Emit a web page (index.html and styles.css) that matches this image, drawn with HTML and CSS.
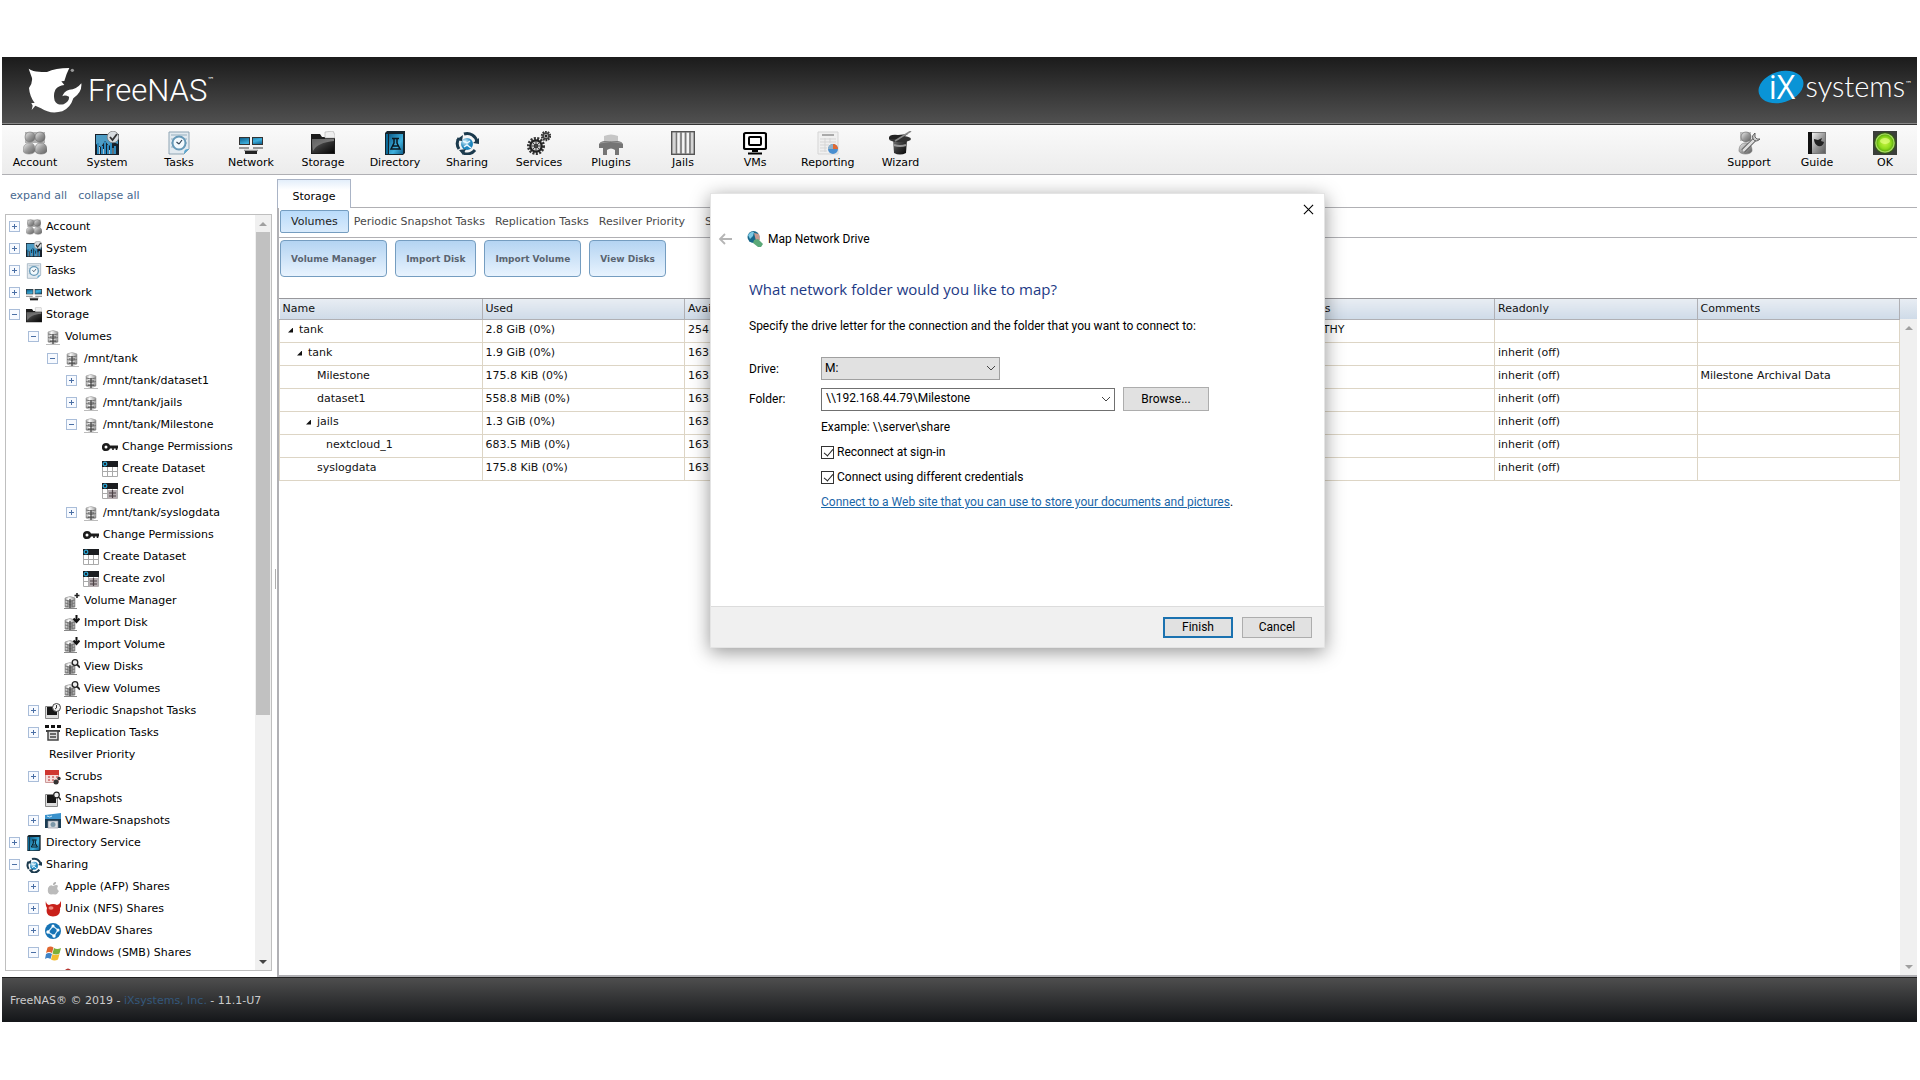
FILE: index.html
```html
<!DOCTYPE html>
<html lang="en">
<head>
<meta charset="utf-8">
<title>FreeNAS - Storage</title>
<link rel="stylesheet" href="styles.css">
</head>
<body>
<svg class="defs" aria-hidden="true">
  <defs>
    <linearGradient id="silver" x1="0" y1="0" x2="1" y2="1"><stop offset="0" stop-color="#f2f2f2"/><stop offset=".5" stop-color="#9a9a9a"/><stop offset="1" stop-color="#5e5e5e"/></linearGradient>
    <linearGradient id="disk" x1="0" x2="1"><stop offset="0" stop-color="#aaa"/><stop offset=".35" stop-color="#fafafa"/><stop offset="1" stop-color="#999"/></linearGradient>
    <linearGradient id="blue" x1="0" y1="0" x2="1" y2="1"><stop offset="0" stop-color="#0d5f8c"/><stop offset=".6" stop-color="#3fb0dd"/><stop offset="1" stop-color="#0d5f8c"/></linearGradient>
    <linearGradient id="dark" x1="0" y1="0" x2="1" y2="1"><stop offset="0" stop-color="#777"/><stop offset=".5" stop-color="#333"/><stop offset="1" stop-color="#050505"/></linearGradient>
    <linearGradient id="sheen" x1="0" y1="0" x2="1" y2="1"><stop offset="0" stop-color="#555"/><stop offset="1" stop-color="#ddd"/></linearGradient>
    <radialGradient id="green"><stop offset="0" stop-color="#c8f542"/><stop offset=".7" stop-color="#8edb1c"/><stop offset="1" stop-color="#5fae10"/></radialGradient>
    <radialGradient id="globe" cx=".35" cy=".3"><stop offset="0" stop-color="#d5f2fd"/><stop offset="1" stop-color="#1c85bd"/></radialGradient>
  </defs>
  <symbol id="i-account" viewBox="0 0 24 24"><rect x="2" y="1" width="20" height="11" fill="#b0b0b0"/><circle cx="7" cy="6" r="5" fill="url(#silver)" stroke="#777" stroke-width=".6"/><circle cx="17" cy="6" r="5" fill="url(#silver)" stroke="#666" stroke-width=".6"/><path d="M0 20c0-6 3-8 7-8s5 3 5 8c-1 4-11 4-12 0z" fill="url(#silver)" stroke="#888" stroke-width=".6"/><path d="M12 20c0-6 2-8 6-8s6 3 6 8c-1 4-11 4-12 0z" fill="url(#silver)" stroke="#666" stroke-width=".6"/></symbol>
  <symbol id="i-system" viewBox="0 0 24 24"><rect y="3" width="24" height="21" fill="#17202a"/><path d="M1 4h22v9l-5-2-4 4-4-5-4 6-5-3z" fill="#4d9cc4"/><path d="M2 23V12h2v11zM6 23V15h2v8zM9 23V11h2v12zM12 23v-9h2v9zM15 23V12h2v11zM19 23v-8h2v8z" fill="#2c8abf"/><path d="M4.500 23v-7M8.500 23v-5M14.500 23v-4M18 23v-6" stroke="#d8e8f0" stroke-width=".8"/><circle cx="18" cy="6" r="5.800" fill="#d9dde0" stroke="#777" stroke-width=".7"/><path d="M15 6l2.500 3L22 3" fill="none" stroke="#333" stroke-width="1.800"/></symbol>
  <symbol id="i-tasks" viewBox="0 0 24 24"><path d="M2 1h20v17l-5 5H2z" fill="#e2eaf0" stroke="#8fa5b4"/><path d="M4 4h16M4 8h16M4 12h16M4 16h14" stroke="#b0c3d0" stroke-width="1.400"/><circle cx="12" cy="12" r="6.500" fill="#f2f9fd" stroke="#6699b8" stroke-width="2"/><path d="M12 13l3-4M9.500 11l2.500 2" fill="none" stroke="#345" stroke-width="1.200"/><path d="M17 23c0-4 1-5 5-5z" fill="#5aa6cf"/></symbol>
  <symbol id="i-network" viewBox="0 0 24 24"><rect y="6" width="11" height="8" fill="#333"/><rect x="13" y="6" width="11" height="8" fill="#333"/><path d="M1 7h9v6H1zM14 7h9v6h-9z" fill="url(#blue)"/><path d="M0 17h10M14 17h10" stroke="#999" stroke-width="2"/><path d="M5 19.500h14" stroke="#999" stroke-width="1.500"/><rect x="6" y="20" width="12" height="3" fill="#222"/></symbol>
  <symbol id="i-storage" viewBox="0 0 24 24"><path d="M0 3h9l2 3h13v17H0z" fill="#1c1c1c"/><path d="M14 1l8-1 2 4v3H14z" fill="#eee" stroke="#aaa" stroke-width=".6"/><path d="M1 8h22v14H1z" fill="url(#dark)"/><path d="M2 20C5 14 12 11 23 10V8H1z" fill="url(#sheen)" opacity=".65"/></symbol>
  <symbol id="i-directory" viewBox="0 0 24 24"><path d="M2 2l2-2h18v22l-2 2H2z" fill="#14232c"/><path d="M6 3h14v20H6z" fill="url(#blue)"/><path d="M3 3h2v20H3z" fill="#0b6a98"/><path d="M9 7.500h7M11 8v4l-3 6h9l-3-6V8M10 15h5" fill="none" stroke="#0a1820" stroke-width="1.500"/></symbol>
  <symbol id="i-sharing" viewBox="0 0 24 24"><circle cx="12" cy="13" r="6" fill="url(#globe)"/><path d="M8 10l4 2 3-2M9 16l3-2 4 3" stroke="#eaf8ff" stroke-width="1.500" fill="none"/><path d="M4 18A10 10 0 0 1 4 7" fill="none" stroke="#1b3a4d" stroke-width="3"/><path d="M9 3a10 10 0 0 1 13 8M20 19a10 10 0 0 1-12 3" fill="none" stroke="#1b3a4d" stroke-width="3"/><path d="M1 9l7-5-1 6zM24 13l-6-1 6-5zM4 19l7-1-3 6z" fill="#1b3a4d"/></symbol>
  <symbol id="i-services" viewBox="0 0 24 24"><circle cx="9" cy="15" r="7.500" fill="none" stroke="#333" stroke-width="3" stroke-dasharray="2 1.300"/><circle cx="9" cy="15" r="5.700" fill="#ccc" stroke="#222" stroke-width="2.200"/><circle cx="9" cy="15" r="2" fill="#111"/><path d="M4 15h10M9 10v10M5.500 11.500l7 7M12.500 11.500l-7 7" stroke="#444"/><circle cx="19" cy="5" r="4" fill="#999" stroke="#333" stroke-width="2.400" stroke-dasharray="1.600 .9"/><circle cx="19" cy="5" r="2.800" fill="#aaa" stroke="#333"/><circle cx="19" cy="5" r="1.200" fill="#222"/></symbol>
  <symbol id="i-plugins" viewBox="0 0 24 24"><path d="M5 5q7-3 14 0v6H5z" fill="#c6c6c6"/><path d="M0 13q2-3 6-3h12q4 0 6 3v4h-4v7h-4v-5q-4-3-8 0v5H4v-7H0z" fill="#757575"/><path d="M1 12q10-3 22 0" stroke="#999" fill="none"/></symbol>
  <symbol id="i-jails" viewBox="0 0 24 24"><rect x=".7" y=".7" width="22.600" height="22.600" fill="#d5d5d5" stroke="#555" stroke-width="1.400"/><path d="M5.500 1v22M10 1v22M14.500 1v22M19 1v22" stroke="#777" stroke-width="1.600"/><path d="M7.500 2v20M12.200 2v20M17 2v20" stroke="#f5f5f5" stroke-width="2"/></symbol>
  <symbol id="i-vms" viewBox="0 0 24 24"><rect x="1" y="2" width="22" height="16" rx="1.500" fill="#fff" stroke="#000" stroke-width="2.200"/><rect x="6" y="6" width="12" height="8" rx="1" fill="#fff" stroke="#000" stroke-width="2"/><path d="M9 20h6M5 22.500h14" stroke="#000" stroke-width="2"/></symbol>
  <symbol id="i-reporting" viewBox="0 0 24 24"><path d="M2 1h20v22H2z" fill="#f0f0f0" stroke="#d5d5d5"/><path d="M6 4h12" stroke="#aaa" stroke-width="2"/><path d="M4 8h16M4 11h16M4 14h9M4 17h7M4 20h7M9 7v14M14 7v5" stroke="#d5d5d5"/><circle cx="17" cy="18" r="5" fill="#4a8fd0"/><path d="M17 18v-5a5 5 0 0 0-5 5z" fill="#8fb0c8"/><path d="M17 18v-5a5 5 0 0 1 5 5z" fill="#e26a32"/></symbol>
  <symbol id="i-wizard" viewBox="0 0 24 24"><path d="M5 9h14l-1 13q-6 3-12 0z" fill="url(#dark)"/><ellipse cx="12" cy="8" rx="11" ry="3.200" fill="#333"/><path d="M1 8Q0 3 10 4l10-1-8 5z" fill="#222"/><path d="M7 10L23 0" stroke="#888" stroke-width="1.600"/><path d="M6 14q6 2 12 0" stroke="#999" stroke-width="2" fill="none"/></symbol>
  <symbol id="i-support" viewBox="0 0 24 24"><rect x="3" y="1" width="11" height="9" fill="#bbb"/><circle cx="9" cy="6" r="5" fill="url(#silver)" stroke="#666" stroke-width=".6"/><path d="M2 20c0-6 3-8 7-8s6 3 6 8c-1 4-12 4-13 0z" fill="url(#silver)" stroke="#777" stroke-width=".6"/><path d="M6 20L18 8" stroke="#555" stroke-width="4.500"/><path d="M6 20L18 8" stroke="#ddd" stroke-width="2.500"/><path d="M18 2q-4 3-2 6 3 4 7 0l-3 0-2-2z" fill="#ccc" stroke="#444" stroke-width=".8"/></symbol>
  <symbol id="i-guide" viewBox="0 0 24 24"><path d="M3 1h18v22H3z" fill="#777"/><path d="M7 2h13v20H7z" fill="url(#silver)"/><path d="M3 1h4v22H3z" fill="#111"/><path d="M9 8l4 1 4-2-1 3 3 1q-1 5-6 4-4-2-4-7z" fill="#222"/></symbol>
  <symbol id="i-ok" viewBox="0 0 24 24"><rect width="24" height="24" fill="#3b3f3a"/><circle cx="12" cy="12" r="11" fill="#34561a"/><circle cx="12" cy="12" r="9.800" fill="#a8dc60"/><circle cx="12" cy="12" r="8.500" fill="url(#green)"/><ellipse cx="12" cy="10" rx="5" ry="3" fill="#e2ff80" opacity=".7"/></symbol>
  <symbol id="i-volume" viewBox="0 0 16 16"><path d="M3 3q5-3 10 0v10q-5 3-10 0z" fill="url(#disk)" stroke="#999" stroke-width=".6"/><path d="M3 5q5 2 10 0M3 8.500q5 2 10 0M3 12q5 2 10 0" stroke="#777" fill="none"/><path d="M8 5v10M5 8h6M5 12h6" stroke="#444" stroke-width="1.200"/><path d="M1 15.500h14" stroke="#bbb"/></symbol>
  <symbol id="i-vol-small" viewBox="0 0 16 16"><path d="M1 5q5-3 10 0v9q-5 2-10 0z" fill="url(#disk)" stroke="#888" stroke-width=".6"/><path d="M1 7q5 2 10 0M1 10q5 2 10 0M1 13q5 2 10 0" stroke="#777" fill="none"/><path d="M6 6v9M3 9h6M3 12h6" stroke="#444" stroke-width="1.200"/><path d="M0 15.500h13" stroke="#888"/></symbol>
  <symbol id="i-vol-add" viewBox="0 0 16 16"><use href="#i-vol-small"/><path d="M13 0v5M10.500 2.500h5" stroke="#222" stroke-width="1.600"/></symbol>
  <symbol id="i-vol-import" viewBox="0 0 16 16"><use href="#i-vol-small"/><path d="M12.500 0v6M9.500 3.500l3 3.500 3-3.500" fill="none" stroke="#111" stroke-width="2"/></symbol>
  <symbol id="i-vol-view" viewBox="0 0 16 16"><use href="#i-vol-small"/><circle cx="11" cy="3.500" r="2.800" fill="#eee" stroke="#222" stroke-width="1.300"/><path d="M13 5.500l3 3" stroke="#222" stroke-width="1.800"/></symbol>
  <symbol id="i-key" viewBox="0 0 16 16"><circle cx="4" cy="8" r="2.800" fill="none" stroke="#1c1c1c" stroke-width="2.600"/><path d="M6 8h10" stroke="#1c1c1c" stroke-width="3"/><path d="M11 8v3M14.500 8v3" stroke="#1c1c1c" stroke-width="1.600"/></symbol>
  <symbol id="i-dataset" viewBox="0 0 16 16"><path d="M.5 5.500h15v10H.5zM.5 10.500h15M5.500 5v11M10.500 5v11" fill="#fff" stroke="#aaa"/><path d="M0 0h16v6H0z" fill="#1b1d20"/><circle cx="3" cy="3" r="1.800" fill="none" stroke="#2ba3d0" stroke-width="1.300"/></symbol>
  <symbol id="i-zvol" viewBox="0 0 16 16"><use href="#i-dataset"/><path d="M6 7h9v9H6z" fill="#b5adb0"/><path d="M10.500 7v8M7 10h7M7 13h7" stroke="#4a4044" stroke-width="1.200"/></symbol>
  <symbol id="i-periodic" viewBox="0 0 16 16"><path d="M.5 3.500h13v12H.5z" fill="#ddd" stroke="#888"/><path d="M2 4h10v8H2z" fill="#171717"/><circle cx="11.500" cy="4.500" r="4" fill="#f3f3f3" stroke="#444"/><path d="M11.500 2v3l-1.500 1" stroke="#333" fill="none"/></symbol>
  <symbol id="i-replication" viewBox="0 0 16 16"><path d="M0 0h4v3H0zM6 0h4v3H6zM12 0h4v3h-4z" fill="#111"/><path d="M1 5h14v2H1z" fill="#444"/><path d="M3 6h10v9H3z" fill="#ddd" stroke="#444" stroke-width="1.500"/><path d="M5 9h6M5 12h6" stroke="#444" stroke-width="1.500"/></symbol>
  <symbol id="i-scrubs" viewBox="0 0 16 16"><path d="M.5 1.500h13v12H.5z" fill="#f5dcda" stroke="#c99"/><path d="M0 1h14v5H0z" fill="#cf3630"/><path d="M3 8h2M7 8h2M3 11h2M7 11h2M11 8h2" stroke="#c66" stroke-width="1.500"/><circle cx="11" cy="13" r="2.500" fill="#333"/><circle cx="14" cy="9.500" r="1.700" fill="#333"/></symbol>
  <symbol id="i-snapshots" viewBox="0 0 16 16"><path d="M.5 3.500h12v12H.5z" fill="#ddd" stroke="#888"/><path d="M2 4h9v8H2z" fill="#171717"/><circle cx="11.500" cy="4" r="2.800" fill="#eee" stroke="#222" stroke-width="1.200"/><path d="M13.500 6l2.500 3" stroke="#222" stroke-width="1.600"/></symbol>
  <symbol id="i-vmware" viewBox="0 0 16 16"><path d="M0 2l16-2v7H0z" fill="#3a92cc"/><path d="M0 6h16v9H0z" fill="#1b3c52"/><path d="M2 3q3 2 5 0" stroke="#cfe8f6" fill="none"/><path d="M3 8h10v7H3z" fill="#d9dde0" stroke="#889" stroke-width=".6"/><circle cx="8" cy="11.500" r="2.500" fill="#7c97a8"/></symbol>
  <symbol id="i-apple" viewBox="0 0 16 16"><path d="M8 7q4-2 5 0-2 3 1 5-2 4-4 3.500-2-.7-4 0Q2 15 3 9q2-4 5-2z" fill="#bbb"/><path d="M8 6q0-3 3-3 0 3-3 3z" fill="#aaa"/></symbol>
  <symbol id="i-bsd" viewBox="0 0 16 16"><path d="M1 0q0 3 3 4 4-2 8 0 3-1 4-4 1 5-1 7 1 8-7 8.500Q0 15 2 7 0 4 1 0z" fill="#c8201a"/><ellipse cx="6" cy="7" rx="2.500" ry="1.800" fill="#ef8a80"/></symbol>
  <symbol id="i-webdav" viewBox="0 0 16 16"><circle cx="8" cy="8" r="8" fill="#1673b5"/><path d="M8 3L3 9l6 4 4-6z" fill="none" stroke="#d9effb" stroke-width="1.200"/><circle cx="8" cy="3" r="1.500" fill="#fff"/><circle cx="3" cy="9" r="1.700" fill="#fff"/><circle cx="9" cy="13" r="1.700" fill="#fff"/><circle cx="13" cy="7" r="1.500" fill="#fff"/></symbol>
  <symbol id="i-windows" viewBox="0 0 16 16"><path d="M2.500 2.500q3-2 6 0L7 8Q4 6 1 8z" fill="#e0662f"/><path d="M9 3q3 2 7 0l-1.500 5.500q-3.500 2-7 0z" fill="#7ab03a"/><path d="M1 9q3-2 6 0l-1.500 5q-3-2-5.500 0z" fill="#3f83c6"/><path d="M7.500 9q3 2 7 0L13 14.500q-3.500 2-7 0z" fill="#f2bd2f"/></symbol>
  <symbol id="i-share" viewBox="0 0 16 16"><path d="M1 3q3-3 6 0h8v11H1z" fill="#b5332f"/></symbol>
</svg>

<div class="app">
  <header class="banner">
    <a class="brand" href="#">
      <svg class="shark" viewBox="80 52 168 138" aria-hidden="true"><path fill="#fff" d="M85 57Q98 66 116 66Q128 68 140 67Q165 55 207 55Q198 72 192 94L183 95L192 106Q174 108 165 120Q158 135 163 153Q171 168 190 164Q208 155 206 141Q193 134 186 140Q190 125 207 120Q228 120 243 101Q246 128 219 146Q210 175 186 185Q150 195 122 176Q110 170 105 168L94 181L97 168L93 160L103 160Q88 140 86 115Q97 100 95 85Z"/><circle cx="216" cy="62" r="5" fill="#999"/></svg>
      <span class="brand-name">FreeNAS</span><sup>™</sup>
    </a>
    <a class="vendor" href="#">
      <svg class="ix" viewBox="0 0 48 38" aria-hidden="true"><ellipse cx="24" cy="19" rx="23" ry="15.500" transform="rotate(-17 24 19)" fill="#0a94d6"/><text class="ix-text" x="25" y="31" text-anchor="middle">iX</text></svg>
      <span class="vendor-name">systems</span><sup>™</sup>
    </a>
  </header>

  <nav class="toolbar">
    <ul class="tools">
      <li><a href="#"><svg><use href="#i-account"/></svg>Account</a></li>
      <li><a href="#"><svg><use href="#i-system"/></svg>System</a></li>
      <li><a href="#"><svg><use href="#i-tasks"/></svg>Tasks</a></li>
      <li><a href="#"><svg><use href="#i-network"/></svg>Network</a></li>
      <li><a href="#"><svg><use href="#i-storage"/></svg>Storage</a></li>
      <li><a href="#"><svg><use href="#i-directory"/></svg>Directory</a></li>
      <li><a href="#"><svg><use href="#i-sharing"/></svg>Sharing</a></li>
      <li><a href="#"><svg><use href="#i-services"/></svg>Services</a></li>
      <li><a href="#"><svg><use href="#i-plugins"/></svg>Plugins</a></li>
      <li><a href="#"><svg><use href="#i-jails"/></svg>Jails</a></li>
      <li><a href="#"><svg><use href="#i-vms"/></svg>VMs</a></li>
      <li><a href="#"><svg><use href="#i-reporting"/></svg>Reporting</a></li>
      <li><a href="#"><svg><use href="#i-wizard"/></svg>Wizard</a></li>
    </ul>
    <ul class="tools tools-right">
      <li><a href="#"><svg><use href="#i-support"/></svg>Support</a></li>
      <li><a href="#"><svg><use href="#i-guide"/></svg>Guide</a></li>
      <li><a href="#"><svg><use href="#i-ok"/></svg>OK</a></li>
    </ul>
  </nav>

  <div class="workspace">
    <aside class="sidebar">
      <div class="tree-links"><a href="#">expand all</a><a href="#">collapse all</a></div>
      <div class="tree-box">
        <ul class="tree">
          <li><div class="node"><button class="exp plus" aria-label="Expand"></button><svg><use href="#i-account"/></svg>Account</div></li>
          <li><div class="node"><button class="exp plus" aria-label="Expand"></button><svg><use href="#i-system"/></svg>System</div></li>
          <li><div class="node"><button class="exp plus" aria-label="Expand"></button><svg><use href="#i-tasks"/></svg>Tasks</div></li>
          <li><div class="node"><button class="exp plus" aria-label="Expand"></button><svg><use href="#i-network"/></svg>Network</div></li>
          <li><div class="node"><button class="exp" aria-label="Collapse"></button><svg><use href="#i-storage"/></svg>Storage</div>
            <ul>
              <li><div class="node"><button class="exp" aria-label="Collapse"></button><svg><use href="#i-volume"/></svg>Volumes</div>
                <ul>
                  <li><div class="node"><button class="exp" aria-label="Collapse"></button><svg><use href="#i-volume"/></svg>/mnt/tank</div>
                    <ul>
                      <li><div class="node"><button class="exp plus" aria-label="Expand"></button><svg><use href="#i-volume"/></svg>/mnt/tank/dataset1</div></li>
                      <li><div class="node"><button class="exp plus" aria-label="Expand"></button><svg><use href="#i-volume"/></svg>/mnt/tank/jails</div></li>
                      <li><div class="node"><button class="exp" aria-label="Collapse"></button><svg><use href="#i-volume"/></svg>/mnt/tank/Milestone</div>
                        <ul>
                          <li><div class="node leaf"><svg><use href="#i-key"/></svg>Change Permissions</div></li>
                          <li><div class="node leaf"><svg><use href="#i-dataset"/></svg>Create Dataset</div></li>
                          <li><div class="node leaf"><svg><use href="#i-zvol"/></svg>Create zvol</div></li>
                        </ul>
                      </li>
                      <li><div class="node"><button class="exp plus" aria-label="Expand"></button><svg><use href="#i-volume"/></svg>/mnt/tank/syslogdata</div></li>
                      <li><div class="node leaf"><svg><use href="#i-key"/></svg>Change Permissions</div></li>
                      <li><div class="node leaf"><svg><use href="#i-dataset"/></svg>Create Dataset</div></li>
                      <li><div class="node leaf"><svg><use href="#i-zvol"/></svg>Create zvol</div></li>
                    </ul>
                  </li>
                  <li><div class="node leaf"><svg><use href="#i-vol-add"/></svg>Volume Manager</div></li>
                  <li><div class="node leaf"><svg><use href="#i-vol-import"/></svg>Import Disk</div></li>
                  <li><div class="node leaf"><svg><use href="#i-vol-import"/></svg>Import Volume</div></li>
                  <li><div class="node leaf"><svg><use href="#i-vol-view"/></svg>View Disks</div></li>
                  <li><div class="node leaf"><svg><use href="#i-vol-view"/></svg>View Volumes</div></li>
                </ul>
              </li>
              <li><div class="node"><button class="exp plus" aria-label="Expand"></button><svg><use href="#i-periodic"/></svg>Periodic Snapshot Tasks</div></li>
              <li><div class="node"><button class="exp plus" aria-label="Expand"></button><svg><use href="#i-replication"/></svg>Replication Tasks</div></li>
              <li><div class="node leaf plain">Resilver Priority</div></li>
              <li><div class="node"><button class="exp plus" aria-label="Expand"></button><svg><use href="#i-scrubs"/></svg>Scrubs</div></li>
              <li><div class="node leaf"><svg><use href="#i-snapshots"/></svg>Snapshots</div></li>
              <li><div class="node"><button class="exp plus" aria-label="Expand"></button><svg><use href="#i-vmware"/></svg>VMware-Snapshots</div></li>
            </ul>
          </li>
          <li><div class="node"><button class="exp plus" aria-label="Expand"></button><svg><use href="#i-directory"/></svg>Directory Service</div></li>
          <li><div class="node"><button class="exp" aria-label="Collapse"></button><svg><use href="#i-sharing"/></svg>Sharing</div>
            <ul>
              <li><div class="node"><button class="exp plus" aria-label="Expand"></button><svg><use href="#i-apple"/></svg>Apple (AFP) Shares</div></li>
              <li><div class="node"><button class="exp plus" aria-label="Expand"></button><svg><use href="#i-bsd"/></svg>Unix (NFS) Shares</div></li>
              <li><div class="node"><button class="exp plus" aria-label="Expand"></button><svg><use href="#i-webdav"/></svg>WebDAV Shares</div></li>
              <li><div class="node"><button class="exp" aria-label="Collapse"></button><svg><use href="#i-windows"/></svg>Windows (SMB) Shares</div>
                <ul>
                  <li><div class="node leaf"><svg><use href="#i-share"/></svg>Milestone</div></li>
                </ul>
              </li>
            </ul>
          </li>
        </ul>
        <div class="scroll"><span class="arrow up"></span><span class="thumb"></span><span class="arrow down"></span></div>
      </div>
    </aside>
    <div class="splitter"><span></span></div>

    <main class="main">
      <div class="tabs"><a class="tab" href="#">Storage</a></div>
      <div class="subtabs">
        <a class="active" href="#">Volumes</a><a href="#">Periodic Snapshot Tasks</a><a href="#">Replication Tasks</a><a href="#">Resilver Priority</a><a class="spaced" href="#">Scrubs</a><a href="#">Snapshots</a><a href="#">VMware-Snapshots</a>
      </div>
      <div class="actions">
        <button>Volume Manager</button><button>Import Disk</button><button>Import Volume</button><button>View Disks</button>
      </div>
      <div class="grid">
        <div class="grid-table">
          <table>
            <thead><tr><th>Name</th><th>Used</th><th>Available</th><th>Compression</th><th>Compression Ratio</th><th>Status</th><th>Readonly</th><th>Comments</th></tr></thead>
            <tbody>
              <tr><td class="d0"><i class="tri"></i>tank</td><td>2.8 GiB (0%)</td><td>254.0 GiB</td><td></td><td></td><td>HEALTHY</td><td></td><td></td></tr>
              <tr><td class="d1"><i class="tri"></i>tank</td><td>1.9 GiB (0%)</td><td>163.0 GiB</td><td></td><td></td><td></td><td>inherit (off)</td><td></td></tr>
              <tr><td class="d2">Milestone</td><td>175.8 KiB (0%)</td><td>163.0 GiB</td><td></td><td></td><td></td><td>inherit (off)</td><td>Milestone Archival Data</td></tr>
              <tr><td class="d2">dataset1</td><td>558.8 MiB (0%)</td><td>163.0 GiB</td><td></td><td></td><td></td><td>inherit (off)</td><td></td></tr>
              <tr><td class="d2 open"><i class="tri"></i>jails</td><td>1.3 GiB (0%)</td><td>163.0 GiB</td><td></td><td></td><td></td><td>inherit (off)</td><td></td></tr>
              <tr><td class="d3">nextcloud_1</td><td>683.5 MiB (0%)</td><td>163.0 GiB</td><td></td><td></td><td></td><td>inherit (off)</td><td></td></tr>
              <tr><td class="d2">syslogdata</td><td>175.8 KiB (0%)</td><td>163.0 GiB</td><td></td><td></td><td></td><td>inherit (off)</td><td></td></tr>
            </tbody>
          </table>
        </div>
        <div class="grid-scroll"><div class="corner"></div><div class="scroll wide"><span class="arrow up"></span><span class="arrow down pale"></span></div></div>
      </div>

      <section class="dialog" role="dialog" aria-labelledby="dlg-title">
        <button class="close" aria-label="Close"><svg viewBox="0 0 12 12"><path d="M1 1l10 10M11 1L1 11" stroke="#000" stroke-width="1.200"/></svg></button>
        <div class="dlg-nav">
          <svg class="back" viewBox="0 0 14 12"><path d="M14 6H2M7 1L2 6l5 5" fill="none" stroke="#b5b5b5" stroke-width="1.800"/></svg>
          <svg class="dlg-icon" viewBox="0 0 16 16"><circle cx="6.500" cy="6" r="6" fill="#17678a"/><path d="M1 4q3-4 6-3L6 5 3 8z" fill="#7cc8e4"/><path d="M7 2l5 1 1 6-4 1z" fill="#c59a90"/><path d="M7 9l4-1 5 5-2 3h-3l-5-4z" fill="#5aa878"/></svg>
          <span id="dlg-title">Map Network Drive</span>
        </div>
        <form class="dlg-body">
          <h1>What network folder would you like to map?</h1>
          <p>Specify the drive letter for the connection and the folder that you want to connect to:</p>
          <div class="fields">
            <label for="drive">Drive:</label>
            <div class="combo drive"><select id="drive"><option>M:</option></select><svg viewBox="0 0 10 6"><path d="M1 1l4 4 4-4" fill="none" stroke="#444"/></svg></div>
            <label for="folder">Folder:</label>
            <div class="folder-row">
              <div class="combo folder"><input id="folder" type="text" value="\\192.168.44.79\Milestone"><svg viewBox="0 0 10 6"><path d="M1 1l4 4 4-4" fill="none" stroke="#444"/></svg></div>
              <button type="button" class="win browse">Browse...</button>
            </div>
          </div>
          <div class="options">
            <span>Example: \\server\share</span>
            <label><input type="checkbox" checked>Reconnect at sign-in</label>
            <label><input type="checkbox" checked>Connect using different credentials</label>
            <span><a href="#">Connect to a Web site that you can use to store your documents and pictures</a>.</span>
          </div>
        </form>
        <div class="dlg-footer"><button class="win primary">Finish</button><button class="win">Cancel</button></div>
      </section>
    </main>
  </div>

  <footer class="footer">FreeNAS® © 2019 - <a href="#">iXsystems, Inc.</a> - 11.1-U7</footer>
</div>
</body>
</html>
```
FILE: styles.css
```css
* { box-sizing: border-box; }
body { margin: 0; background: #fff; color: #111; font: 11px/16px "DejaVu Sans", Verdana, sans-serif; }
a { color: inherit; text-decoration: none; }
ul { list-style: none; margin: 0; padding: 0; }
button { font: inherit; color: inherit; }
.defs { display: block; width: 0; height: 0; }

.app { display: flex; flex-direction: column; height: 100vh; padding: 57px 3px 58px 2px; }

.banner { display: flex; justify-content: space-between; flex: none; height: 67px; background: linear-gradient(#1b1b1b, #505050); border-bottom: 1px solid #888; color: #fff; }
.brand, .vendor { display: flex; }
.brand { padding: 10px 0 0 25px; }
.shark { width: 56px; height: 46px; }
.brand-name { margin-left: 5px; font: 300 31px/48px Roboto, sans-serif; }
.brand sup, .vendor sup { font-size: 7px; line-height: 10px; }
.brand sup { margin-top: 8px; }
.vendor { padding: 11px 5px 0 0; }
.ix { width: 48px; height: 38px; }
.ix-text { font: 32px "Open Sans", sans-serif; fill: #fff; }
.vendor-name { margin-left: 1px; font: 300 29px/36px Lato, sans-serif; }
.vendor sup { margin-top: 11px; }

.toolbar { display: flex; justify-content: space-between; flex: none; height: 51px; padding: 6px 6px 0 7px; background: linear-gradient(#fafafa, #ececec); border-top: 1px solid #333; border-bottom: 1px solid #b0b0b4; }
.tools { display: flex; gap: 20px; }
.tools-right { gap: 16px; }
.tools a { display: flex; flex-direction: column; align-items: center; min-width: 52px; color: #000; }
.tools svg { width: 24px; height: 24px; }

.workspace { display: flex; flex: 1; min-height: 0; }
.sidebar { display: flex; flex-direction: column; width: 271px; padding: 0 1px 6px 3px; }
.tree-links { display: flex; gap: 11px; padding: 13px 5px 10px; color: #48698f; }
.tree-box { display: flex; flex: 1; min-height: 0; border: 1px solid #bfbfbf; }
.tree { flex: 1; overflow: hidden; padding: 0 0 0 3px; }
.tree ul { padding-left: 19px; }
.node { display: flex; align-items: center; height: 22px; padding-top: 1px; white-space: nowrap; color: #000; }
.node svg { flex: none; width: 16px; height: 16px; margin: 1px 4px 0 0; }
.exp { position: relative; flex: none; width: 11px; height: 11px; margin-right: 6px; padding: 0; border: 1px solid #a9bdd9; background: #f7faff; }
.exp::before, .exp.plus::after { content: ""; position: absolute; left: 2px; top: 4px; width: 5px; height: 1px; background: #4a6fa5; }
.exp.plus::after { left: 4px; top: 2px; width: 1px; height: 5px; }
.leaf { padding-left: 17px; }
.leaf.plain { padding-left: 21px; }

.scroll { display: flex; flex-direction: column; flex: none; width: 16px; background: #f0f0f0; }
.scroll.wide { width: 17px; flex: 1; }
.arrow { height: 17px; display: grid; place-items: center; }
.arrow::before { content: ""; border: 4px solid transparent; }
.up::before { border-top: 0; border-bottom-color: #a0a0a0; }
.down::before { border-bottom: 0; border-top-color: #444; }
.down { margin-top: auto; }
.pale::before { border-top-color: #a0a0a0; }
.thumb { height: 64%; margin: 0 1px; background: #c1c1c1; }

.splitter { display: grid; align-items: center; justify-content: center; width: 4px; padding-top: 6px; }
.splitter span { width: 1px; height: 20px; background: #b0b0b0; }

.main { position: relative; display: flex; flex-direction: column; flex: 1; min-width: 0; padding-top: 4px; }
.tabs { display: flex; height: 29px; border-bottom: 1px solid #b0b0b4; }
.tab { width: 74px; height: 29px; line-height: 34px; text-align: center; color: #000; border: 1px solid #aab4c6; border-bottom: 0; background: linear-gradient(#e3eefa, #fff 10px); }
.subtabs { display: flex; align-items: center; height: 30px; padding: 0 3px 3px 1px; border-left: 2px solid #b0b0b4; border-bottom: 1px solid #b0b0b4; color: #494949; }
.subtabs a { padding: 3px 4px; border: 1px solid transparent; border-radius: 2px; height: 23px; }
.subtabs .active { padding: 3px 10px; border-color: #759dc0; background: linear-gradient(#b9dbfa, #d9ebfc); color: #222; }
.subtabs .spaced { margin-left: 10px; }
.actions { display: flex; gap: 8px; padding: 2px 1px 21px; border-left: 2px solid #b0b0b4; }
.actions button { height: 37px; padding: 0 10px; border: 1px solid #759dc0; border-radius: 4px; background: linear-gradient(#b4d4f2, #e8f3fe); color: #5a6470; font: bold 9px/16px "DejaVu Sans", Verdana, sans-serif; }

.grid { display: flex; flex: 1; min-height: 0; border-left: 2px solid #b0b0b4; border-bottom: 2px solid #b0b0b4; }
.grid-table { flex: 1; border-top: 1px solid #98989c; }
table { width: 100%; table-layout: fixed; border-collapse: collapse; }
th, td { padding: 0 3px; text-align: left; font-weight: normal; white-space: nowrap; overflow: hidden; }
th { height: 20px; background: linear-gradient(#e8edf3, #cfdbe8); border-right: 1px solid #b0b0b4; border-bottom: 1px solid #b0b0b4; }
td { height: 23px; padding-bottom: 2px; border: 1px solid #ddd5c5; border-top: 0; }
.tri { display: inline-block; width: 5px; height: 5px; margin-right: 6px; background: #111; clip-path: polygon(100% 0, 100% 100%, 0 100%); }
td.d0 { padding-left: 8px; }
td.d1 { padding-left: 17px; }
td.d2 { padding-left: 37px; }
td.d2.open { padding-left: 26px; }
td.d3 { padding-left: 46px; }
.grid-scroll { display: flex; flex-direction: column; }
.corner { height: 21px; border-top: 1px solid #98989c; background: linear-gradient(#e8edf3, #cfdbe8); }

.dialog { position: absolute; left: 433px; top: 18px; display: flex; flex-direction: column; width: 615px; height: 455px; border: 1px solid #e4e4e4; background: #fff; box-shadow: 0 4px 18px rgba(0, 0, 0, .42); color: #000; font: 12px/16px Roboto, "Open Sans", sans-serif; }
.close { align-self: flex-end; width: 32px; height: 30px; padding: 0; border: 0; background: none; }
.close svg { display: block; width: 11px; height: 11px; margin: auto; }
.dlg-nav { display: flex; align-items: center; height: 30px; padding-left: 7px; }
.back { width: 14px; height: 12px; }
.dlg-icon { width: 16px; height: 16px; margin: 0 5px 0 15px; }
.dlg-body { padding: 23px 38px 0; }
h1 { margin: 0 0 17px; color: #1d3a85; font: 15px/24px "Open Sans", "Noto Sans", sans-serif; }
p { margin: 0 0 23px; }
.fields { display: grid; grid-template-columns: 72px 1fr; row-gap: 7px; align-items: center; }
.combo { position: relative; }
.combo svg { position: absolute; right: 4px; top: 8px; width: 10px; height: 6px; pointer-events: none; }
.combo select, .combo input { display: block; width: 100%; height: 23px; padding: 0 4px 2px; border: 1px solid #707070; border-radius: 0; background: #fff; appearance: none; font: inherit; color: #000; }
.combo select { background: #e1e1e1; border-color: #a0a0a0; padding-left: 3px; }
.drive { width: 179px; }
.folder { width: 294px; }
.folder-row { display: flex; align-items: center; gap: 8px; }
.win { width: 70px; height: 21px; padding: 0; border: 1px solid #adadad; background: #e1e1e1; }
.browse { width: 86px; height: 24px; }
.primary { border: 2px solid #1b72b0; }
.options { display: flex; flex-direction: column; gap: 9px; padding: 8px 0 0 72px; }
.options label { display: flex; align-items: center; gap: 3px; }
.options input { position: relative; appearance: none; width: 13px; height: 13px; margin: 0; border: 1px solid #333; background: #fff; }
.options input:checked::after { content: ""; position: absolute; left: 4px; top: 0; width: 4px; height: 8px; border: solid #222; border-width: 0 1px 1px 0; transform: rotate(40deg); }
.options a { color: #1a66a8; text-decoration: underline; }
.dlg-footer { display: flex; align-items: center; justify-content: flex-end; gap: 9px; height: 41px; margin-top: auto; padding-right: 12px; border-top: 1px solid #dcdcdc; background: #f0f0f0; }

.footer { flex: none; height: 45px; padding-left: 8px; border-top: 1px solid #222; background: linear-gradient(#4e4e4e, #141619); color: #ccc; line-height: 46px; }
.footer a { color: #34587c; }
```
